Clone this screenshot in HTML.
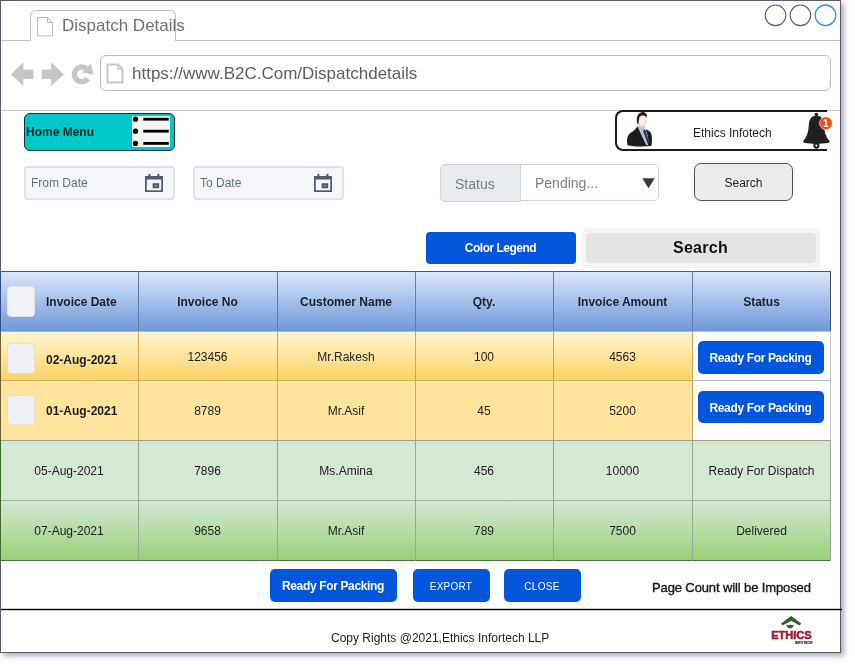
<!DOCTYPE html>
<html><head><meta charset="utf-8">
<style>
*{box-sizing:border-box;margin:0;padding:0}
html,body{width:855px;height:665px;background:#fff;overflow:hidden;font-family:"Liberation Sans",sans-serif}
.a{position:absolute}
#win{position:absolute;left:0;top:0;width:841px;height:653px;border:1px solid #5e5d66;background:#fff;box-shadow:3px 3px 5px rgba(70,70,110,.45)}
.t{position:absolute;white-space:nowrap}
.hl{position:absolute;height:1px;background:#c4c4c4}
.btn{position:absolute;padding-top:1px;letter-spacing:-0.35px;background:#0256dc;border-radius:5px;color:#fff;text-align:center;font-weight:bold;font-size:12px}
.col{position:absolute;top:0;bottom:0;width:1px}
.cell{position:absolute;margin-top:1px;text-align:center;font-size:12px;color:#222;white-space:nowrap}
</style></head>
<body>
<div id="root" style="position:absolute;left:0;top:0;width:855px;height:665px;will-change:transform">
<div id="win"></div>

<!-- tab bar line -->
<div class="hl" style="left:1px;top:40px;width:839px;background:#c2c2c2"></div>
<!-- tab -->
<div class="a" style="left:30px;top:10px;width:146px;height:31px;border:1px solid #bcbcbc;border-bottom:none;border-radius:6px 6px 0 0;background:#fff"></div>
<svg class="a" style="left:36px;top:16px" width="18" height="22" viewBox="0 0 18 22">
  <path d="M1.5 1.5 H11.5 L16.5 6.5 V19.8 H1.5 Z" fill="#fff" stroke="#bdbdbd" stroke-width="1"/>
  <path d="M11.5 1.5 V6.5 H16.5" fill="none" stroke="#bdbdbd" stroke-width="1"/>
</svg>
<div class="t" style="left:62px;top:16px;font-size:17px;line-height:20px;color:#707070">Dispatch Details</div>

<!-- window controls -->
<svg class="a" style="left:760px;top:0" width="80" height="32">
  <circle cx="15.5" cy="15.3" r="10.3" fill="none" stroke="#5a5a5a" stroke-width="1.1"/>
  <circle cx="40.4" cy="15.3" r="10.3" fill="none" stroke="#5a5a5a" stroke-width="1.1"/>
  <circle cx="65.5" cy="15.3" r="10.3" fill="none" stroke="#3a8ee0" stroke-width="1.3"/>
</svg>

<!-- nav icons -->
<svg class="a" style="left:0;top:55px" width="100" height="40">
  <path d="M11 19.4 L23.3 7.2 V14.4 H33.3 V23.9 H23.3 V31.1 Z" fill="#c6c6c6"/>
  <path d="M63.9 19.4 L51.1 7.2 V14.4 H41.7 V23.9 H51.1 V31.1 Z" fill="#c6c6c6"/>
  <path d="M87.8 23.7 A7.4 7.4 0 1 1 86.2 13.4" fill="none" stroke="#c6c6c6" stroke-width="5.4"/>
  <path d="M82 17.5 L90.8 8.5 L93.5 19.5 Z" fill="#c6c6c6"/>
</svg>

<!-- address bar -->
<div class="a" style="left:100px;top:55px;width:731px;height:36px;border:1px solid #bdbdbd;border-radius:6px"></div>
<svg class="a" style="left:105px;top:63px" width="20" height="22" viewBox="0 0 20 22">
  <path d="M2.5 1.5 H13 L17.5 6 V19.5 H2.5 Z" fill="#fff" stroke="#c8c8c8" stroke-width="2"/>
  <path d="M13 1.5 V6 H17.5" fill="none" stroke="#c8c8c8" stroke-width="1.5"/>
</svg>
<div class="t" style="left:132px;top:64px;font-size:17px;line-height:20px;color:#5e5e5e">https://www.B2C.Com/Dispatchdetails</div>

<!-- separator -->
<div class="hl" style="left:1px;top:110px;width:839px"></div>

<!-- home menu -->
<div class="a" style="left:24px;top:113px;width:151px;height:38px;background:#00c8c8;border:1.5px solid #0f3434;border-radius:6px"></div>
<div class="t" style="left:26px;top:125px;font-size:12px;line-height:15px;font-weight:bold;color:#0c2a2a">Home Menu</div>
<div class="a" style="left:132px;top:116px;width:38px;height:31px;background:#f3f3f3"></div>
<svg class="a" style="left:130px;top:114px" width="42" height="34">
  <circle cx="5.5" cy="5.2" r="2.6" fill="#000"/>
  <circle cx="5.5" cy="17.2" r="2.6" fill="#000"/>
  <circle cx="5.5" cy="29.4" r="2.6" fill="#000"/>
  <rect x="13.3" y="3.8" width="25.4" height="2.8" fill="#000"/>
  <rect x="13.3" y="15.8" width="25.4" height="2.8" fill="#000"/>
  <rect x="13.3" y="28" width="25.4" height="2.8" fill="#000"/>
</svg>

<!-- profile card -->
<div class="a" style="left:615px;top:110px;width:212px;height:41px;border:2px solid #1a1a1a;border-right:none;border-radius:8px 0 0 8px;background:#fff"></div>
<svg class="a" style="left:620px;top:110px" width="40" height="40" viewBox="0 0 40 40">
  <defs>
    <radialGradient id="fc" cx="55%" cy="50%" r="60%"><stop offset="0" stop-color="#fffaf6"/><stop offset=".6" stop-color="#f7e2d4"/><stop offset="1" stop-color="#d9ab8e"/></radialGradient>
    <radialGradient id="sh" cx="50%" cy="50%" r="50%"><stop offset="0" stop-color="#999" stop-opacity=".7"/><stop offset="1" stop-color="#fff" stop-opacity="0"/></radialGradient>
  </defs>
  <ellipse cx="20" cy="36" rx="14" ry="2.6" fill="url(#sh)"/>
  <path d="M7.6 35.2 C6.6 31 6.8 26.5 9.2 24.2 C11.5 22 14.5 21 17.2 16.6 L25.4 19.6 C28.5 20.6 30.8 22.5 31.4 25.5 C32 29 31.8 33 31 35.8 C25 36.8 14 36.6 7.6 35.2 Z" fill="#1d1d1f"/>
  <path d="M17.4 16.4 L22 18.6 L25.6 19.4 L27.6 24 L29.2 34.6 L26.4 35.6 Z" fill="#a9c3da"/>
  <path d="M23 20.6 L25.3 20.2 L30.4 34.6 L28.6 35.7 L24.6 25 Z" fill="#18212b"/>
  <path d="M24.8 23.2 L25.6 23 L29.6 33 L29 33.3 Z" fill="#7b8fa0" opacity=".55"/>
  <path d="M26.4 19.6 C29.5 20.6 31.2 22.5 31.6 25.5 C32 29 31.8 33 31.2 35.9 L29.8 36 L30.2 34.4 Z" fill="#1d1d1f"/>
  <path d="M19 13 L19.5 18 L22.5 19.2 L25 18.4 L24.5 14 Z" fill="#e2bca2"/>
  <ellipse cx="21.8" cy="11.2" rx="4.7" ry="6.6" fill="url(#fc)"/>
  <path d="M17.2 13.8 C16.2 8.5 17 3.2 21.6 2.2 C25.5 1.6 27.5 4.5 26.8 8 C25.8 5.8 23.8 5.2 21.8 5.6 C19.6 6 18.8 8.5 18.6 13.5 Z" fill="#2a211e"/>
</svg>
<div class="t" style="left:693px;top:126px;font-size:12px;line-height:15px;color:#1e1e1e">Ethics Infotech</div>
<!-- bell -->
<svg class="a" style="left:800px;top:110px" width="36" height="42" viewBox="0 0 36 42">
  <ellipse cx="16.4" cy="4.4" rx="1.9" ry="1.7" fill="#231f20"/>
  <path d="M16.4 5.8 C11.5 5.8 9.2 9 8.8 15 C8.4 22 7 26.5 3.6 30.5 C2.8 31.5 3 32.5 4.5 32.8 C8 33.5 12 33.8 16.4 33.8 C20.8 33.8 24.8 33.5 28.3 32.8 C29.8 32.5 30 31.5 29.2 30.5 C25.8 26.5 24.4 22 24 15 C23.6 9 21.3 5.8 16.4 5.8 Z" fill="#231f20"/>
  <circle cx="16.4" cy="35.6" r="2.1" fill="none" stroke="#231f20" stroke-width="2"/>
  <circle cx="25.9" cy="13.2" r="6.4" fill="#ef4a14" stroke="#fff" stroke-width=".6"/>
  <text x="25.9" y="16.9" font-family="Liberation Sans" font-weight="bold" font-size="10" fill="#fff" text-anchor="middle">1</text>
</svg>

<!-- date inputs -->
<div class="a" style="left:24px;top:166px;width:151px;height:34px;background:#f5f6f9;border:2px solid #e1e2e6;border-radius:4px"></div>
<div class="t" style="left:31px;top:176px;font-size:12px;line-height:15px;color:#666e7e">From Date</div>
<div class="a" style="left:193px;top:166px;width:151px;height:34px;background:#f5f6f9;border:2px solid #e1e2e6;border-radius:4px"></div>
<div class="t" style="left:200px;top:176px;font-size:12px;line-height:15px;color:#666e7e">To Date</div>
<svg class="a" style="left:145px;top:173px" width="20" height="20" viewBox="0 0 20 20">
  <path d="M0 3 H18 V19 H0 Z M1.8 6.6 V17.2 H16.2 V6.6 Z" fill="#525b6e" fill-rule="evenodd"/>
  <rect x="3.4" y="0.8" width="2" height="3" fill="#525b6e"/>
  <rect x="12.4" y="0.8" width="2" height="3" fill="#525b6e"/>
  <rect x="7.6" y="10.2" width="6.6" height="5.1" fill="#525b6e"/>
  <rect x="10.3" y="12.2" width="1.2" height="1.1" fill="#cfd2da"/>
</svg>
<svg class="a" style="left:314px;top:173px" width="20" height="20" viewBox="0 0 20 20">
  <path d="M0 3 H18 V19 H0 Z M1.8 6.6 V17.2 H16.2 V6.6 Z" fill="#525b6e" fill-rule="evenodd"/>
  <rect x="3.4" y="0.8" width="2" height="3" fill="#525b6e"/>
  <rect x="12.4" y="0.8" width="2" height="3" fill="#525b6e"/>
  <rect x="7.6" y="10.2" width="6.6" height="5.1" fill="#525b6e"/>
  <rect x="10.3" y="12.2" width="1.2" height="1.1" fill="#cfd2da"/>
</svg>

<!-- status group -->
<div class="a" style="left:440px;top:164px;width:81px;height:38px;background:#e9ecef;border:1px solid #ced4da;border-radius:5px 0 0 5px"></div>
<div class="t" style="left:455px;top:176px;font-size:14px;line-height:17px;color:#787d84">Status</div>
<div class="a" style="left:521px;top:164px;width:138px;height:37px;background:#fff;border:1px solid #ced4da;border-left:none;border-radius:0 5px 5px 0"></div>
<div class="t" style="left:535px;top:175px;font-size:14px;line-height:17px;color:#7a7f86">Pending...</div>
<svg class="a" style="left:641px;top:177px" width="16" height="13"><path d="M1.3 1.2 H13.8 L7.55 11.2 Z" fill="#343a40"/></svg>

<!-- search btn -->
<div class="a" style="left:694px;top:163px;width:99px;height:38px;background:#ebebed;border:1px solid #555;border-radius:7px"></div>
<div class="t" style="left:694px;top:176px;width:99px;text-align:center;font-size:12px;line-height:15px;color:#222">Search</div>

<!-- color legend -->
<div class="btn" style="left:425.5px;top:231.5px;width:150px;height:32.5px;line-height:32px;border-radius:4px;padding-top:0;letter-spacing:-0.5px">Color Legend</div>
<div class="a" style="left:581px;top:228px;width:239px;height:40px;background:#f4f4f4;border-radius:7px"></div>
<div class="a" style="left:585.5px;top:232.5px;width:230px;height:30.5px;background:#e3e3e3;border-radius:4px"></div>
<div class="t" style="left:585px;top:238px;width:231px;text-align:center;font-size:16px;line-height:19px;font-weight:bold;color:#111;letter-spacing:0.3px">Search</div>

<div class="a" style="left:0;top:0;width:841px;height:653px;border:1px solid #5e5d66"></div>
<!-- table -->
<div class="a" style="left:0;top:271px;width:831px;height:290px">
  <!-- header -->
  <div class="a" style="left:0;top:0;width:831px;height:60px;background:linear-gradient(#dae7fa,#6e98d9);border-top:1px solid #555"></div>
  <!-- row1 -->
  <div class="a" style="left:0;top:60px;width:692px;height:50px;background:linear-gradient(#fff4d2,#fdd263);border-top:1px solid #b4b2a6"></div>
  <div class="a" style="left:692px;top:60px;width:139px;height:50px;background:#fff;border-top:1px solid #b8bcc8"></div>
  <!-- row2 -->
  <div class="a" style="left:0;top:109px;width:692px;height:60px;background:#ffe49d;border-top:1px solid #cdb060"></div>
  <div class="a" style="left:692px;top:109px;width:139px;height:60px;background:#fff;border-top:1px solid #bbb"></div>
  <!-- row3 -->
  <div class="a" style="left:0;top:169px;width:831px;height:60px;background:#d5e8d4;border-top:1px solid #a3a27f"></div>
  <!-- row4 -->
  <div class="a" style="left:0;top:229px;width:831px;height:60px;background:linear-gradient(#d5e8d4,#97d077);border-top:1px solid #9fb89c"></div>
  <div class="a" style="left:0;top:289px;width:831px;height:1px;background:#4d6e40"></div>
  <div class="a" style="left:0;top:0;width:1px;height:60px;background:#2e4f80"></div>
  <div class="a" style="left:0;top:60px;width:1px;height:109px;background:#6e5f35"></div>
  <div class="a" style="left:0;top:169px;width:1px;height:121px;background:#3f6b30"></div>
  <!-- column lines -->
  <div class="a" style="left:138px;top:0;width:1px;height:60px;background:#5f7eae"></div>
  <div class="a" style="left:277px;top:0;width:1px;height:60px;background:#5f7eae"></div>
  <div class="a" style="left:415px;top:0;width:1px;height:60px;background:#5f7eae"></div>
  <div class="a" style="left:553px;top:0;width:1px;height:60px;background:#5f7eae"></div>
  <div class="a" style="left:692px;top:0;width:1px;height:60px;background:#5f7eae"></div>
  <div class="a" style="left:830px;top:0;width:1px;height:60px;background:#4a5468"></div>

  <div class="a" style="left:138px;top:60px;width:1px;height:109px;background:#c9a95c"></div>
  <div class="a" style="left:277px;top:60px;width:1px;height:109px;background:#c9a95c"></div>
  <div class="a" style="left:415px;top:60px;width:1px;height:109px;background:#c9a95c"></div>
  <div class="a" style="left:553px;top:60px;width:1px;height:109px;background:#c9a95c"></div>
  <div class="a" style="left:692px;top:60px;width:1px;height:109px;background:#c9a95c"></div>
  <div class="a" style="left:830px;top:60px;width:1px;height:109px;background:#c8c8c8"></div>

  <div class="a" style="left:138px;top:169px;width:1px;height:121px;background:#98aa96"></div>
  <div class="a" style="left:277px;top:169px;width:1px;height:121px;background:#98aa96"></div>
  <div class="a" style="left:415px;top:169px;width:1px;height:121px;background:#98aa96"></div>
  <div class="a" style="left:553px;top:169px;width:1px;height:121px;background:#98aa96"></div>
  <div class="a" style="left:692px;top:169px;width:1px;height:121px;background:#98aa96"></div>
  <div class="a" style="left:830px;top:169px;width:1px;height:121px;background:#98aa96"></div>

  <!-- header text -->
  <div class="a" style="left:7px;top:15px;width:28px;height:31px;background:#f1f2f6;border:1px solid #dfe3ee;border-radius:4px"></div>
  <div class="cell" style="left:46px;top:23px;font-weight:bold;color:#1b2030;line-height:15px;text-align:left">Invoice Date</div>
  <div class="cell" style="left:138px;width:139px;top:23px;font-weight:bold;color:#1b2030;line-height:15px">Invoice No</div>
  <div class="cell" style="left:277px;width:138px;top:23px;font-weight:bold;color:#1b2030;line-height:15px">Customer Name</div>
  <div class="cell" style="left:415px;width:138px;top:23px;font-weight:bold;color:#1b2030;line-height:15px">Qty.</div>
  <div class="cell" style="left:553px;width:139px;top:23px;font-weight:bold;color:#1b2030;line-height:15px">Invoice Amount</div>
  <div class="cell" style="left:692px;width:139px;top:23px;font-weight:bold;color:#1b2030;line-height:15px">Status</div>

  <!-- row1 text -->
  <div class="a" style="left:7px;top:72px;width:28px;height:31px;background:#eef0f6;border:1px solid #e6dfcb;border-radius:4px"></div>
  <div class="cell" style="left:46px;top:81px;font-weight:bold;line-height:15px;text-align:left;color:#1a1a1a">02-Aug-2021</div>
  <div class="cell" style="left:138px;width:139px;top:78px;line-height:15px">123456</div>
  <div class="cell" style="left:277px;width:138px;top:78px;line-height:15px">Mr.Rakesh</div>
  <div class="cell" style="left:415px;width:138px;top:78px;line-height:15px">100</div>
  <div class="cell" style="left:553px;width:139px;top:78px;line-height:15px">4563</div>
  <div class="btn" style="left:697.5px;top:69.5px;width:126px;height:33px;line-height:33px">Ready For Packing</div>

  <!-- row2 text -->
  <div class="a" style="left:7px;top:124px;width:28px;height:30px;background:#eef0f6;border:1px solid #e6dfcb;border-radius:4px"></div>
  <div class="cell" style="left:46px;top:132px;font-weight:bold;line-height:15px;text-align:left;color:#1a1a1a">01-Aug-2021</div>
  <div class="cell" style="left:138px;width:139px;top:132px;line-height:15px">8789</div>
  <div class="cell" style="left:277px;width:138px;top:132px;line-height:15px">Mr.Asif</div>
  <div class="cell" style="left:415px;width:138px;top:132px;line-height:15px">45</div>
  <div class="cell" style="left:553px;width:139px;top:132px;line-height:15px">5200</div>
  <div class="btn" style="left:697.5px;top:120px;width:126px;height:32px;line-height:32px">Ready For Packing</div>

  <!-- row3 -->
  <div class="cell" style="left:0;width:138px;top:192px;line-height:15px">05-Aug-2021</div>
  <div class="cell" style="left:138px;width:139px;top:192px;line-height:15px">7896</div>
  <div class="cell" style="left:277px;width:138px;top:192px;line-height:15px">Ms.Amina</div>
  <div class="cell" style="left:415px;width:138px;top:192px;line-height:15px">456</div>
  <div class="cell" style="left:553px;width:139px;top:192px;line-height:15px">10000</div>
  <div class="cell" style="left:692px;width:139px;top:192px;line-height:15px">Ready For Dispatch</div>

  <!-- row4 -->
  <div class="cell" style="left:0;width:138px;top:252px;line-height:15px">07-Aug-2021</div>
  <div class="cell" style="left:138px;width:139px;top:252px;line-height:15px">9658</div>
  <div class="cell" style="left:277px;width:138px;top:252px;line-height:15px">Mr.Asif</div>
  <div class="cell" style="left:415px;width:138px;top:252px;line-height:15px">789</div>
  <div class="cell" style="left:553px;width:139px;top:252px;line-height:15px">7500</div>
  <div class="cell" style="left:692px;width:139px;top:252px;line-height:15px">Delivered</div>
</div>

<!-- bottom buttons -->
<div class="btn" style="left:269.5px;top:568.5px;width:127px;height:33px;line-height:33px">Ready For Packing</div>
<div class="btn" style="left:412.5px;top:568.5px;width:77px;height:33px;line-height:33px;font-weight:normal;font-size:10px;letter-spacing:0.25px">EXPORT</div>
<div class="btn" style="left:503.5px;top:568.5px;width:77px;height:33px;line-height:33px;font-weight:normal;font-size:10px;letter-spacing:0.3px">CLOSE</div>
<div class="t" style="left:652px;top:580px;font-size:13px;line-height:16px;letter-spacing:-0.12px;color:#151515;-webkit-text-stroke:0.35px #151515">Page Count will be Imposed</div>

<!-- footer -->
<div class="a" style="left:1px;top:608px;width:841px;height:3px;background:linear-gradient(rgba(0,0,0,.2) 33.3%,#000 33.3%,#000 66.6%,rgba(0,0,0,.2) 66.6%)"></div>
<div class="t" style="left:331px;top:631px;font-size:12px;line-height:15px;color:#222">Copy Rights @2021,Ethics Infortech LLP</div>
<svg class="a" style="left:768px;top:612px" width="50" height="36" viewBox="0 0 50 36">
  <path d="M23.1 3.9 L33.2 11.4 L31.6 13.6 L23.1 8.7 L14.6 13.6 L13.0 11.4 Z" fill="#2b5e2b"/>
  <path d="M18.2 12.6 C18.8 15.6 20.2 16.3 21.9 16.3 C24 16.3 25.4 15.4 25.8 12.4 C24.4 13.4 23.2 13.4 22.2 12.5 C21 13.5 19.6 13.4 18.2 12.6 Z" fill="#2b5e2b"/>
  <text x="3.2" y="27.3" font-family="Liberation Sans" font-weight="bold" font-size="10.5" fill="#a81a2c" stroke="#a81a2c" stroke-width="0.55" textLength="40.5" lengthAdjust="spacingAndGlyphs">ETHICS</text>
  <text x="27" y="31.5" font-family="Liberation Sans" font-weight="bold" font-size="3.6" fill="#333" stroke="#333" stroke-width="0.2" textLength="17.5" lengthAdjust="spacingAndGlyphs">INFOTECH</text>
</svg>
</div>
</body></html>
